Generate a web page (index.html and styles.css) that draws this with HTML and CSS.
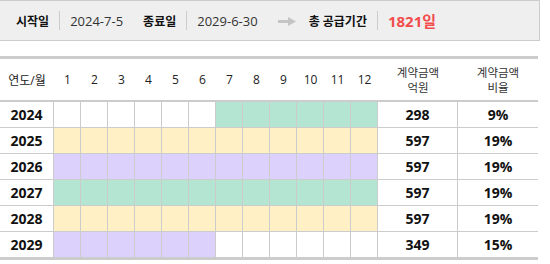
FILE: index.html
```html
<!DOCTYPE html>
<html lang="ko">
<head>
<meta charset="utf-8">
<link rel="stylesheet" href="styles.css">
</head>
<body>
<div class="summary">
  <span class="label">시작일</span><span class="sep"></span><span class="value">2024-7-5</span>
  <span class="label gap">종료일</span><span class="sep"></span><span class="value">2029-6-30</span>
  <svg class="arrow" width="18" height="9" viewBox="0 0 18 9"><rect x="0" y="3" width="11" height="3" fill="#c4c4c4"/><polygon points="10,0 18,4.5 10,9" fill="#c4c4c4"/></svg>
  <span class="label">총 공급기간</span><span class="sep"></span><span class="total">1821일</span>
</div>

<div class="sched">
  <div class="grid head">
    <div>연도/월</div><div>1</div><div>2</div><div>3</div><div>4</div><div>5</div><div>6</div><div>7</div><div>8</div><div>9</div><div>10</div><div>11</div><div>12</div>
    <div class="two"><span>계약금액</span><span>억원</span></div><div class="two"><span>계약금액</span><span>비율</span></div>
  </div>
  <div class="grid row">
    <div class="yr">2024</div>
    <div class="m"></div><div class="m"></div><div class="m"></div><div class="m"></div><div class="m"></div><div class="m"></div>
    <div class="m g"></div><div class="m g"></div><div class="m g"></div><div class="m g"></div><div class="m g"></div><div class="m g"></div>
    <div class="num">298</div><div class="num last">9%</div>
  </div>
  <div class="grid row">
    <div class="yr">2025</div>
    <div class="m y"></div><div class="m y"></div><div class="m y"></div><div class="m y"></div><div class="m y"></div><div class="m y"></div>
    <div class="m y"></div><div class="m y"></div><div class="m y"></div><div class="m y"></div><div class="m y"></div><div class="m y"></div>
    <div class="num">597</div><div class="num last">19%</div>
  </div>
  <div class="grid row">
    <div class="yr">2026</div>
    <div class="m p"></div><div class="m p"></div><div class="m p"></div><div class="m p"></div><div class="m p"></div><div class="m p"></div>
    <div class="m p"></div><div class="m p"></div><div class="m p"></div><div class="m p"></div><div class="m p"></div><div class="m p"></div>
    <div class="num">597</div><div class="num last">19%</div>
  </div>
  <div class="grid row">
    <div class="yr">2027</div>
    <div class="m g"></div><div class="m g"></div><div class="m g"></div><div class="m g"></div><div class="m g"></div><div class="m g"></div>
    <div class="m g"></div><div class="m g"></div><div class="m g"></div><div class="m g"></div><div class="m g"></div><div class="m g"></div>
    <div class="num">597</div><div class="num last">19%</div>
  </div>
  <div class="grid row">
    <div class="yr">2028</div>
    <div class="m y"></div><div class="m y"></div><div class="m y"></div><div class="m y"></div><div class="m y"></div><div class="m y"></div>
    <div class="m y"></div><div class="m y"></div><div class="m y"></div><div class="m y"></div><div class="m y"></div><div class="m y"></div>
    <div class="num">597</div><div class="num last">19%</div>
  </div>
  <div class="grid row lastrow">
    <div class="yr">2029</div>
    <div class="m p"></div><div class="m p"></div><div class="m p"></div><div class="m p"></div><div class="m p"></div><div class="m p"></div>
    <div class="m"></div><div class="m"></div><div class="m"></div><div class="m"></div><div class="m"></div><div class="m"></div>
    <div class="num">349</div><div class="num last">15%</div>
  </div>
</div>
</body>
</html>
```
FILE: styles.css
```css
* { box-sizing: border-box; }
body {
  margin: 0;
  font-family: "Open Sans", "Noto Sans CJK KR", sans-serif;
  color: #111;
  background: #fff;
}
.summary {
  width: 540px;
  height: 41px;
  background: #efefef;
  border: 1px solid #cccccc;
  border-left: none;
  display: flex;
  align-items: center;
  padding-left: 16px;
}
.label {
  font-size: 12px;
  font-weight: 700;
  color: #111;
}
.label.gap { margin-left: 20px; }
.sep {
  width: 1px;
  height: 19px;
  background: #cccccc;
  margin: 0 10px;
}
.value {
  font-size: 13px;
  color: #333;
}
.arrow {
  margin-left: 20px;
  margin-right: 13px;
  margin-top: 2px;
}
.total {
  font-size: 15px;
  font-weight: 700;
  color: #f24c4c;
}
.sched {
  width: 538px;
  margin-top: 15px;
  border-top: 3px solid #cccccc;
  border-bottom: 3px solid #cccccc;
}
.grid {
  display: grid;
  grid-template-columns: 54px repeat(12, 27px) 80px 80px;
}
.head {
  height: 43px;
  border-bottom: 2px solid #cccccc;
  font-size: 12px;
  color: #222;
}
.head > div {
  display: flex;
  align-items: center;
  justify-content: center;
  text-align: center;
}
.head .two {
  flex-direction: column;
  font-size: 11.5px;
  line-height: 15px;
  color: #333;
}
.row {
  height: 26px;
  border-bottom: 1px solid #cccccc;
}
.row.lastrow { border-bottom: none; height: 25px; }
.row > div {
  border-right: 1px solid #cccccc;
  display: flex;
  align-items: center;
  justify-content: center;
  font-size: 14px;
  font-weight: 700;
}
.row > div.last { border-right: none; }
.g { background: #b4e5d2; }
.y { background: #fff0c5; }
.p { background: #dcd0fc; }
```
